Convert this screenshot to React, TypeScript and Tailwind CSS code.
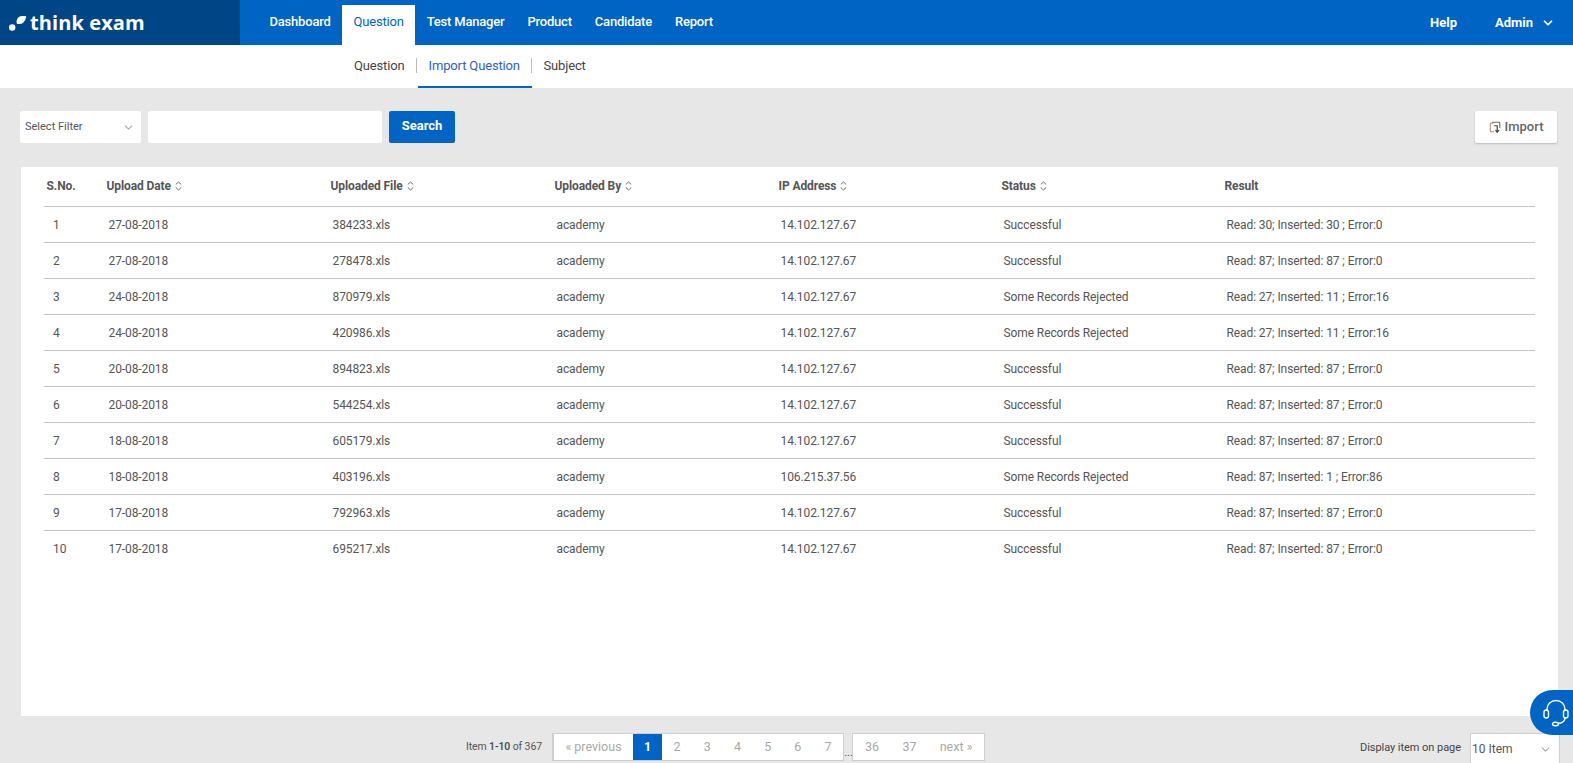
import { ChevronDown } from "lucide-react";

const navLinks = ["Dashboard", "Question", "Test Manager", "Product", "Candidate", "Report"];

const columns = [
  { label: "S.No.", sort: false, width: "w-[60px]" },
  { label: "Upload Date", sort: true, width: "w-[224px]" },
  { label: "Uploaded File", sort: true, width: "w-[224px]" },
  { label: "Uploaded By", sort: true, width: "w-[224px]" },
  { label: "IP Address", sort: true, width: "w-[223px]" },
  { label: "Status", sort: true, width: "w-[223px]" },
  { label: "Result", sort: false, width: "" },
];

const ok = "Successful";
const some = "Some Records Rejected";
const ip = "14.102.127.67";

const rows = [
  ["27-08-2018", "384233.xls", ip, ok, "Read: 30; Inserted: 30 ; Error:0"],
  ["27-08-2018", "278478.xls", ip, ok, "Read: 87; Inserted: 87 ; Error:0"],
  ["24-08-2018", "870979.xls", ip, some, "Read: 27; Inserted: 11 ; Error:16"],
  ["24-08-2018", "420986.xls", ip, some, "Read: 27; Inserted: 11 ; Error:16"],
  ["20-08-2018", "894823.xls", ip, ok, "Read: 87; Inserted: 87 ; Error:0"],
  ["20-08-2018", "544254.xls", ip, ok, "Read: 87; Inserted: 87 ; Error:0"],
  ["18-08-2018", "605179.xls", ip, ok, "Read: 87; Inserted: 87 ; Error:0"],
  ["18-08-2018", "403196.xls", "106.215.37.56", some, "Read: 87; Inserted: 1 ; Error:86"],
  ["17-08-2018", "792963.xls", ip, ok, "Read: 87; Inserted: 87 ; Error:0"],
  ["17-08-2018", "695217.xls", ip, ok, "Read: 87; Inserted: 87 ; Error:0"],
];

function SortIcon() {
  return (
    <svg width="7" height="10" viewBox="0 0 7 10" fill="none" stroke="#666" strokeWidth="1" className="ml-[4px]">
      <path d="M.8 3.5 3.5 1l2.7 2.5M.8 6.5 3.5 9l2.7-2.5" />
    </svg>
  );
}

function Logo() {
  return (
    <div className="flex items-center w-[240px] h-full bg-[#004687] pl-[9px] shrink-0">
      <svg width="18" height="18" viewBox="0 0 18 18" fill="white" className="mt-[1px]">
        <circle cx="3.2" cy="13.5" r="3.2" />
        <path d="M7.5 8.5C7.5 4.8 9.8 2 13 2h3c1 0 1.4.7 1.1 1.6C16.2 7 14 10 11 10H9c-.9 0-1.5-.6-1.5-1.5z" />
      </svg>
      <span className="ml-[3px] text-[20px] leading-none font-bold tracking-[0.1px] text-white font-['Open_Sans',sans-serif]">
        think exam
      </span>
    </div>
  );
}

function TopNav() {
  return (
    <header className="flex h-[45px] bg-[#0064c4] text-white">
      <Logo />
      <nav className="flex pl-[18px] pt-[5px]">
        {navLinks.map((link) => (
          <a
            key={link}
            className={`flex items-center h-[40px] px-[11.5px] pb-[6px] text-[13px] tracking-[-0.2px] ${
              link === "Question" ? "bg-white text-[#0064c4] font-normal" : "text-white font-medium"
            }`}
          >
            {link}
          </a>
        ))}
      </nav>
      <div className="ml-auto flex items-center pr-[18px] text-[13px] font-bold">
        <span>Help</span>
        <span className="ml-[38px]">Admin</span>
        <ChevronDown className="ml-[8px] w-[14px] h-[14px]" strokeWidth={3} />
      </div>
    </header>
  );
}

function SubNav() {
  return (
    <div className="flex items-stretch h-[43px] bg-white pl-[343px] text-[13px] tracking-[-0.15px] text-[#444]">
      <a className="flex items-center px-[11px] pb-[2px]">Question</a>
      <span className="w-px h-[15px] mt-[13px] bg-[#bbb]" />
      <a className="flex items-center w-[114px] pl-[11px] text-[#2f5fc4] border-b-2 border-[#0064c4] ml-[1px]">
        Import Question
      </a>
      <span className="w-px h-[15px] mt-[13px] -ml-[1px] bg-[#bbb]" />
      <a className="flex items-center pl-[12px] pb-[2px]">Subject</a>
    </div>
  );
}

function Toolbar() {
  return (
    <div className="flex h-[32px] mt-[23px] pl-[20px] pr-[16px]">
      <div className="flex items-center justify-between w-[121px] bg-white rounded-[2px] pl-[5px] pr-[6px] text-[11px] text-[#555]">
        <span>Select Filter</span>
        <ChevronDown className="w-[13px] h-[13px] text-[#aaa]" />
      </div>
      <div className="w-[234px] ml-[7px] bg-white rounded-[2px]" />
      <button className="w-[66px] ml-[7px] bg-[#0064c4] rounded-[2px] text-white text-[13px] font-bold pb-[3px]">Search</button>
      <button className="flex items-center justify-center ml-auto w-[82px] bg-white rounded-[2px] shadow-[0_1px_2px_rgba(0,0,0,0.2)] text-[13px] font-medium text-[#666]">
        <svg width="13" height="15" viewBox="0 0 15 15" fill="none" className="mr-[3px]">
          <path d="M5 2.5H2.5a1 1 0 0 0-1 1v8a1 1 0 0 0 1 1H6" stroke="#b08a7a" strokeWidth="1.2" />
          <path d="M3.5 1.5h8a1 1 0 0 1 1 1V8" stroke="#666" strokeWidth="1.2" />
          <path d="M6 5.5h3.5V12M7.5 10.5l2 2.5 2-2.5" stroke="#444" strokeWidth="1.4" />
        </svg>
        Import
      </button>
    </div>
  );
}

function DataTable() {
  return (
    <div className="mt-[24px] ml-[21px] mr-[15px] h-[549px] bg-white pl-[23px] pr-[23px]">
      <table className="w-full table-fixed border-collapse text-[12px] tracking-[-0.1px] text-[#555]">
        <thead>
          <tr className="h-[39px] border-b border-[#c4c4c4]">
            {columns.map((col) => (
              <th key={col.label} className={`${col.width} pl-[2.5px] text-left font-bold`}>
                <span className="inline-flex items-center">
                  {col.label}
                  {col.sort && <SortIcon />}
                </span>
              </th>
            ))}
          </tr>
        </thead>
        <tbody>
          {rows.map((row, i) => (
            <tr key={i} className="h-[36px] border-b border-[#c4c4c4] last:border-b-0">
              <td className="pl-[9px] pt-[1px]">{i + 1}</td>
              <td className="pl-[4.5px] pt-[1px]">{row[0]}</td>
              <td className="pl-[4.5px] pt-[1px]">{row[1]}</td>
              <td className="pl-[4.5px] pt-[1px]">academy</td>
              <td className="pl-[4.5px] pt-[1px]">{row[2]}</td>
              <td className="pl-[4.5px] pt-[1px]">{row[3]}</td>
              <td className="pl-[4.5px] pt-[1px]">{row[4]}</td>
            </tr>
          ))}
        </tbody>
      </table>
    </div>
  );
}

function Pager() {
  const pageCell = "flex items-center justify-center h-full";
  return (
    <div className="flex h-[28px] text-[12.5px] text-[#a8a8a8]">
      <div className="flex bg-white border border-[#cfcfcf] border-l-2">
        <span className={`${pageCell} w-[79px]`}>« previous</span>
        <span className={`${pageCell} w-[29px] bg-[#0064c4] text-white font-bold`}>1</span>
        {[2, 3, 4, 5, 6, 7].map((n) => (
          <span key={n} className={`${pageCell} w-[30.2px]`}>
            {n}
          </span>
        ))}
      </div>
      <span className="w-[8px] self-end pb-[3px] text-[#555] leading-none text-[11px]">...</span>
      <div className="flex bg-white border border-[#cfcfcf]">
        <span className={`${pageCell} w-[38px]`}>36</span>
        <span className={`${pageCell} w-[37px]`}>37</span>
        <span className={`${pageCell} w-[56px]`}>next »</span>
      </div>
    </div>
  );
}

function Footer() {
  return (
    <div className="flex mt-[17px] pr-[13px]">
      <div className="flex items-center justify-end w-[542px] h-[28px] text-[10.5px] tracking-[-0.1px] text-[#555]">
        <span>
          Item <b className="font-medium text-[#444]">1-10</b> of 367
        </span>
      </div>
      <div className="ml-[10px]">
        <Pager />
      </div>
      <div className="ml-auto flex">
        <span className="mt-[7px] text-[11px] tracking-[-0.05px] text-[#444]">Display item on page</span>
        <div className="flex items-center justify-between w-[90px] h-[32px] ml-[9px] bg-white border border-[#cfcfcf] pl-[1px] pr-[7px] text-[12px] text-[#555]">
          <span>10 Item</span>
          <ChevronDown className="w-[13px] h-[13px] text-[#aaa]" />
        </div>
      </div>
    </div>
  );
}

export default function App() {
  return (
    <div className="relative h-[763px] overflow-hidden bg-[#e7e7e7] font-['Roboto',sans-serif]">
      <TopNav />
      <SubNav />
      <Toolbar />
      <DataTable />
      <Footer />
      {/* chat widget */}
      <div className="absolute right-0 top-[690px] flex items-center pl-[12px] w-[43px] h-[45px] rounded-l-[23px] bg-[#0064c4]">
        <svg width="28" height="30" viewBox="0 0 28 30" fill="none" stroke="white" strokeWidth="1.4">
          <path d="M5 13v-2a9 8.5 0 0 1 18 0v2" />
          <rect x="2" y="12" width="4.5" height="8" rx="2.2" />
          <rect x="21.5" y="12" width="4.5" height="8" rx="2.2" />
          <path d="M23 20c0 3-3 5-7 5.5" />
          <ellipse cx="13.5" cy="26" rx="3" ry="1.8" />
        </svg>
      </div>
    </div>
  );
}
